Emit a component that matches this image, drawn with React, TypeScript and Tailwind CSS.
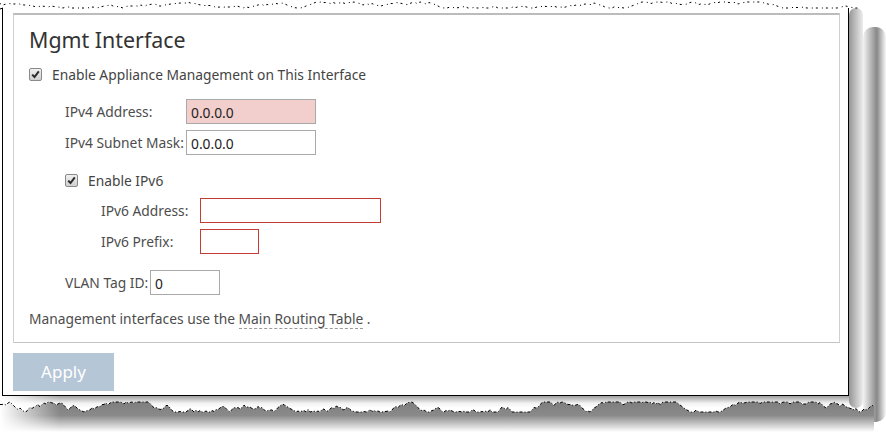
import React from "react";

function makeRng(seed: number) {
  let s = seed;
  return () => {
    s = (s * 16807) % 2147483647;
    return (s - 1) / 2147483646;
  };
}

function jagPoints(x0: number, x1: number, step: number, base: number, amp: number, seed: number) {
  const r = makeRng(seed);
  const pts: [number, number][] = [];
  let y = base;
  for (let x = x0; x <= x1; x += step) {
    y += (r() - 0.5) * amp;
    if (y > base + amp) y = base + amp;
    if (y < base - amp) y = base - amp;
    pts.push([x, Math.round(y * 2) / 2]);
  }
  return pts;
}

const CheckBox = () => (
  <span className="inline-flex w-[13px] h-[13px] shrink-0 items-center justify-center rounded-[2px] border border-[#8a8a8a] bg-gradient-to-b from-[#f0f0f0] to-[#d0d0d0]">
    <svg width="9" height="9" viewBox="0 0 9 9">
      <path d="M1.2 4.6 L3.5 7 L7.8 1.4" fill="none" stroke="#2a2a2a" strokeWidth="2" />
    </svg>
  </span>
);

const Frame = () => {
  const top = jagPoints(0, 862, 3, 5, 3, 7);
  const bottom = jagPoints(0, 874, 2, 407, 5, 19);
  const topStr = top.map((p) => p.join(",")).join(" ");
  const botStr = bottom.map((p) => p.join(",")).join(" ");
  const shadowPoly = botStr + " 874,432 0,432";
  return (
    <svg className="absolute left-0 top-0 pointer-events-none" width="886" height="432">
      <defs>
        <linearGradient id="r1" x1="0" y1="0" x2="1" y2="0">
          <stop offset="0" stopColor="#959595" />
          <stop offset="1" stopColor="#ededed" />
        </linearGradient>
        <linearGradient id="r2" x1="0" y1="0" x2="1" y2="0">
          <stop offset="0" stopColor="#f4f4f4" />
          <stop offset="0.6" stopColor="#888888" />
          <stop offset="1" stopColor="#f8f8f8" />
        </linearGradient>
        <linearGradient id="b1" x1="0" y1="0" x2="0" y2="1">
          <stop offset="0" stopColor="#a0a0a0" />
          <stop offset="0.6" stopColor="#f2f2f2" />
          <stop offset="1" stopColor="#ffffff" />
        </linearGradient>
        <linearGradient id="sh" gradientUnits="userSpaceOnUse" x1="0" y1="402" x2="0" y2="432">
          <stop offset="0" stopColor="#7e7e7e" />
          <stop offset="0.45" stopColor="#8a8a8a" />
          <stop offset="1" stopColor="#ffffff" />
        </linearGradient>
        <linearGradient id="lf" x1="0" y1="0" x2="1" y2="0">
          <stop offset="0" stopColor="#ffffff" stopOpacity="1" />
          <stop offset="1" stopColor="#ffffff" stopOpacity="0" />
        </linearGradient>
      </defs>
      <rect x="863" y="27" width="23" height="395" rx="10" fill="url(#r2)" />
      <rect x="849" y="8" width="14" height="400" rx="7" fill="url(#r1)" />
      <rect x="0" y="396" width="849" height="12" fill="url(#b1)" />
      <polygon points={shadowPoly} fill="url(#sh)" />
      <rect x="0" y="396" width="60" height="36" fill="url(#lf)" />
      <polyline points={botStr} fill="none" stroke="#000" strokeWidth="1" strokeDasharray="3 2 1 2" />
      <polyline points={topStr} fill="none" stroke="#000" strokeWidth="1" strokeDasharray="1 3 2 4" />
      <path d="M0 9 L3 8" stroke="#000" strokeWidth="1" />
    </svg>
  );
};

export default function App() {
  return (
    <div
      className="relative w-[886px] h-[432px] bg-white overflow-hidden text-[13.8px] text-[#4d4d4d]"
      style={{ fontFamily: '"Noto Sans", "Open Sans", sans-serif' }}
    >
      <div className="ml-[2px] mt-[8px] w-[847px] h-[388px] box-border border-l border-r border-b border-black pt-[5px] pl-[10px] pr-[8px] flex flex-col">
        <div className="box-border h-[330px] border-t-2 border-t-[#bcbcbc] border-l border-r border-b border-l-[#cfcfcf] border-r-[#cfcfcf] border-b-[#c4c4c4] pl-[15px] flex flex-col">
          <div className="mt-[10px] h-[29px] leading-[30px] text-[21.4px] text-[#333]">Mgmt Interface</div>

          <div className="mt-[10px] h-[20px] flex items-center gap-[10px]">
            <CheckBox />
            <span className="pt-[2px] leading-[20px] text-[#444]">Enable Appliance Management on This Interface</span>
          </div>

          <div className="mt-[15px] ml-[36px] h-[25px] flex items-center">
            <span className="w-[121px] pt-[2px]">IPv4 Address:</span>
            <input
              readOnly
              defaultValue="0.0.0.0"
              className="box-border w-[130px] h-[25px] border border-[#a9a9a9] bg-[#f2cecc] pl-[4px] pt-[1px] text-[13.8px] text-[#222] outline-none"
            />
          </div>
          <div className="mt-[6px] ml-[36px] h-[25px] flex items-center">
            <span className="w-[121px] pt-[2px]">IPv4 Subnet Mask:</span>
            <input
              readOnly
              defaultValue="0.0.0.0"
              className="box-border w-[130px] h-[25px] border border-[#a9a9a9] bg-white pl-[4px] pt-[1px] text-[13.8px] text-[#222] outline-none"
            />
          </div>

          <div className="mt-[15px] ml-[36px] h-[20px] flex items-center gap-[10px]">
            <CheckBox />
            <span className="pt-[2px] leading-[20px] text-[#444]">Enable IPv6</span>
          </div>

          <div className="mt-[8px] ml-[72px] h-[25px] flex items-center">
            <span className="w-[99px] pt-[2px]">IPv6 Address:</span>
            <input
              readOnly
              defaultValue=""
              className="box-border w-[181px] h-[25px] border border-[#c43c33] bg-white pl-[4px] text-[13.8px] outline-none"
            />
          </div>
          <div className="mt-[6px] ml-[72px] h-[25px] flex items-center">
            <span className="w-[99px] pt-[2px]">IPv6 Prefix:</span>
            <input
              readOnly
              defaultValue=""
              className="box-border w-[59px] h-[25px] border border-[#c43c33] bg-white pl-[4px] text-[13.8px] outline-none"
            />
          </div>

          <div className="mt-[16px] ml-[36px] h-[25px] flex items-center">
            <span className="w-[85px] pt-[2px]">VLAN Tag ID:</span>
            <input
              readOnly
              defaultValue="0"
              className="box-border w-[70px] h-[25px] border border-[#a9a9a9] bg-white pl-[4px] pt-[1px] text-[13.8px] text-[#222] outline-none"
            />
          </div>

          <div className="mt-[14px] h-[20px] leading-[20px]">
            Management interfaces use the{" "}
            <span className="border-b border-dashed border-[#9a9a9a]">Main Routing Table</span>{" "}.
          </div>
        </div>

        <button className="mt-[10px] w-[101px] h-[38px] bg-[#b5c6d6] text-white text-[17px] leading-[38px]">
          Apply
        </button>
      </div>
      <Frame />
    </div>
  );
}
